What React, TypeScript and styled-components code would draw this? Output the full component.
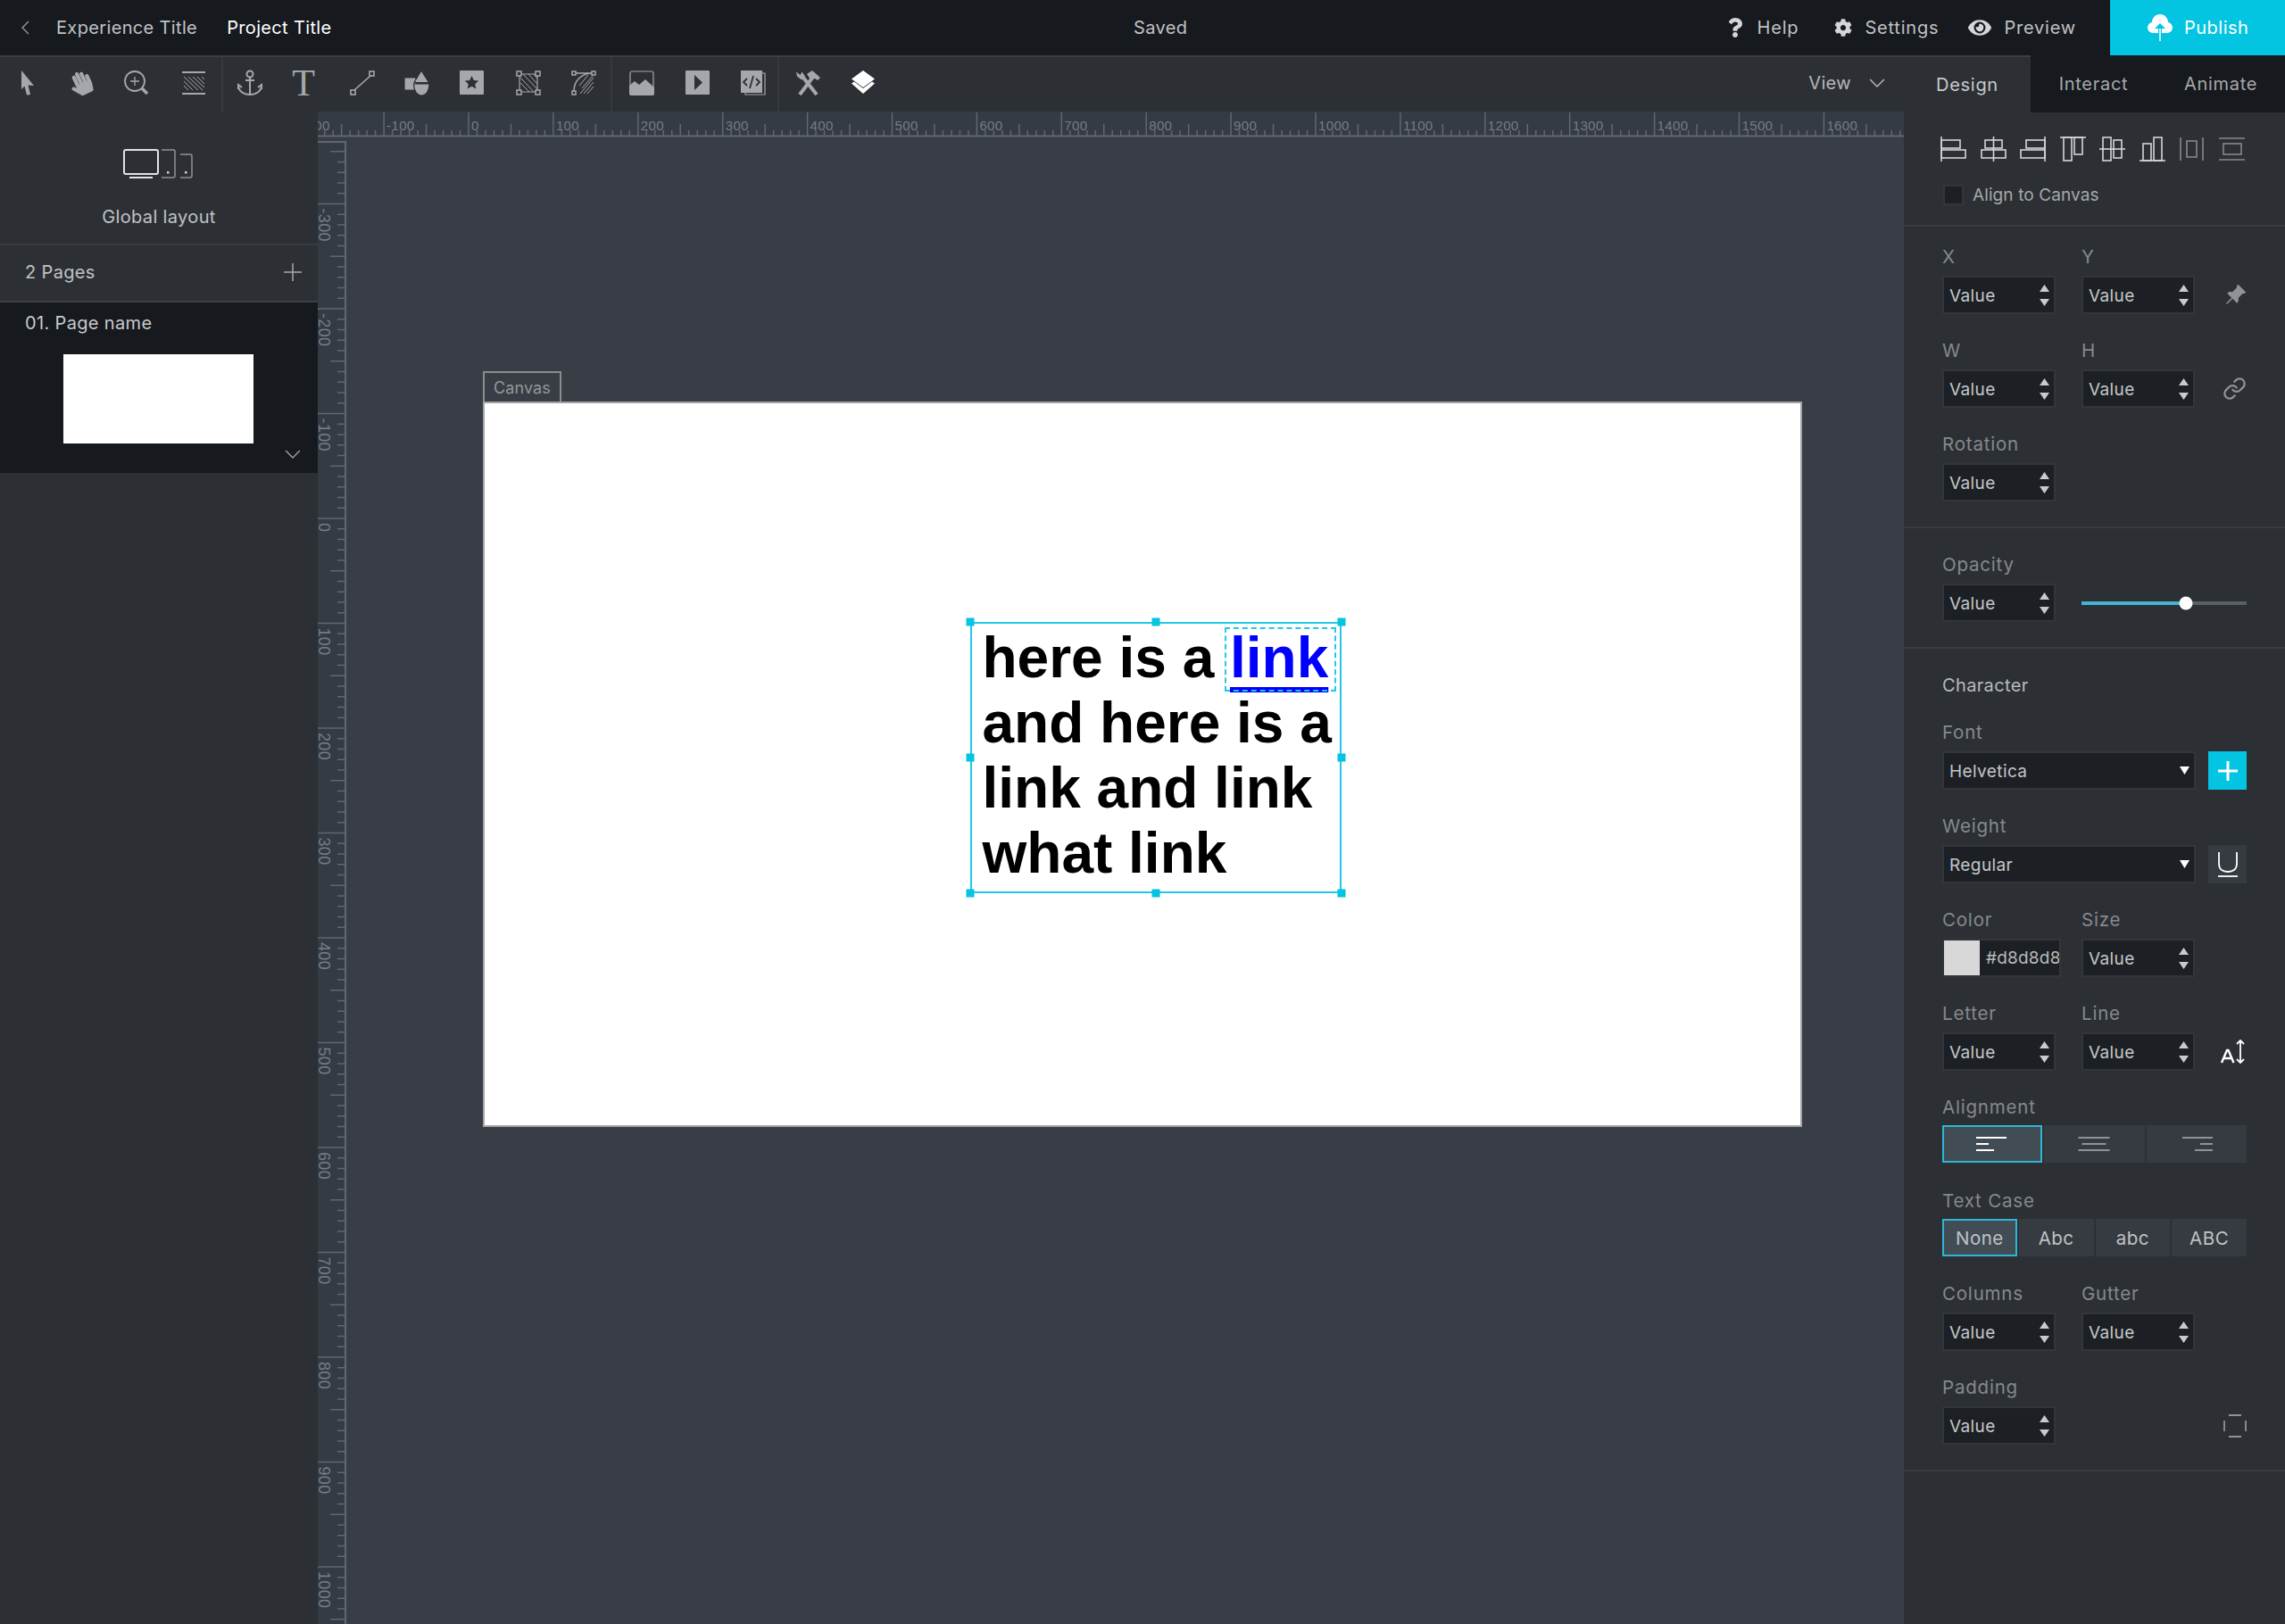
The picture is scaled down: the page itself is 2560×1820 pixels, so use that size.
import React from "react";
import styled, { createGlobalStyle } from "styled-components";
import { FaCog, FaEye, FaHandPaper, FaQuestion } from "react-icons/fa";
import { BsPinAngleFill } from "react-icons/bs";
import { FiLink } from "react-icons/fi";

const UI_FONT = `"Inter", "Noto Sans", sans-serif`;
const CYAN = "#03c4e1";

const GlobalStyle = createGlobalStyle`
	html, body {
		margin: 0;
		padding: 0;
		background: #2c3035;
	}

	* {
		box-sizing: border-box;
	}
`;

function Chevron({ dir = "down", size = 16 }: { dir?: "down" | "left"; size?: number }) {
	return (
		<svg width={size} height={size} viewBox="0 0 16 16" fill="none" stroke="currentColor" strokeWidth="1.3">
			{dir === "down" ? <path d="M1 4.5l7 7 7-7" /> : <path d="M11 1L4 8l7 7" />}
		</svg>
	);
}

function CloudIcon() {
	return (
		<svg width="28" height="32" viewBox="0 0 28 32" fill="#fff">
			<path d="M6.5 22C3 22 0 19.4 0 16c0-2.900 2-5.300 4.800-6C5.600 4.300 9.300 1 14 1s8.400 3.300 9.200 9c2.800.7 4.800 3.100 4.800 6 0 3.400-3 6-6.500 6z" />
			<path d="M14 11l-6 6h4v6h4v-6h4z" fill={CYAN} />
			<rect x="13.200" y="17" width="1.600" height="14" />
		</svg>
	);
}

function ArrowTool() {
	return (
		<svg width="28" height="28" viewBox="0 0 28 28" fill="currentColor">
			<path d="M7 0l14 17-6.500-.5L17 27l-4 .5-2.500-10L7 21z" />
		</svg>
	);
}

function ZoomTool() {
	return (
		<svg width="28" height="28" viewBox="0 0 28 28" fill="none" stroke="currentColor" strokeWidth="1.800">
			<circle cx="12" cy="12" r="11" />
			<path d="M12 7v10M7 12h10" strokeWidth="1.300" />
			<path d="M20 20l6 6" strokeWidth="3.500" />
		</svg>
	);
}

function HatchTool() {
	return (
		<svg width="28" height="28" viewBox="0 0 28 28" fill="none" stroke="currentColor">
			<path d="M1 2h26M1 26h26" strokeWidth="2" />
			<path d="M3 7l16 15M8 7l16 15M13 7l13 12M18 7l8 8M3 12l10 10M3 17l5 5M23 7l3 3" strokeWidth="1" />
		</svg>
	);
}

function AnchorTool() {
	return (
		<svg width="28" height="30" viewBox="0 0 28 30" fill="none" stroke="currentColor" strokeWidth="2">
			<circle cx="14" cy="5" r="3.500" />
			<path d="M14 8.500V28M9 12h10M1 18c0 6 6 10 13 10s13-4 13-10" />
			<path d="M1 22l0-5 4 3M27 22v-5l-4 3" />
		</svg>
	);
}

function LineTool() {
	return (
		<svg width="28" height="28" viewBox="0 0 28 28" fill="none" stroke="currentColor" strokeWidth="1.600">
			<rect x="22" y="1" width="5" height="5" />
			<rect x="1" y="22" width="5" height="5" />
			<path d="M23 6L5 22" />
		</svg>
	);
}

function ShapesTool() {
	return (
		<svg width="28" height="28" viewBox="0 0 28 28" fill="currentColor" stroke="#2c3035" strokeWidth="1.200">
			<path d="M0 8h13v14H0z" />
			<path d="M19 0l8.500 13.500H11z" />
			<path d="M10.500 15h17.500c0 7.500-3.500 13-8.700 13s-8.800-5.500-8.800-13z" />
		</svg>
	);
}

function StarTool() {
	return (
		<svg width="28" height="28" viewBox="0 0 28 28">
			<rect width="27" height="27" rx="1" fill="currentColor" />
			<path d="M13.500 6l2.300 5 5.400.6-4 3.600 1.100 5.300-4.800-2.700-4.800 2.700 1.100-5.300-4-3.600 5.400-.6z" fill="#2c3035" />
		</svg>
	);
}

function FrameTool() {
	return (
		<svg width="28" height="28" viewBox="0 0 28 28" fill="none" stroke="currentColor">
			<path d="M4 4h20v20H4z" strokeWidth="1.200" />
			<path d="M5 8l15 16M5 14l10 10M8 4l16 17M14 4l10 11M20 4l4 5" strokeWidth="1" />
			<g fill="#2c3035" strokeWidth="1.500">
				<rect x="1" y="1" width="5" height="5" />
				<rect x="22" y="1" width="5" height="5" />
				<rect x="1" y="22" width="5" height="5" />
				<rect x="22" y="22" width="5" height="5" />
			</g>
		</svg>
	);
}

function CurveTool() {
	return (
		<svg width="28" height="28" viewBox="0 0 28 28" fill="none" stroke="currentColor">
			<path d="M10 26L25 8M14 26l11-13M18 26l7-8M12 20l12-14M9 17l10-12" strokeWidth="1" />
			<path d="M3 23C3 11 12 3 24 3H3" strokeWidth="1.500" />
			<g fill="#2c3035" strokeWidth="1.500">
				<rect x="1" y="1" width="4" height="4" />
				<rect x="23" y="1" width="4" height="4" />
				<rect x="1" y="23" width="4" height="4" />
			</g>
		</svg>
	);
}

function ImageTool() {
	return (
		<svg width="28" height="28" viewBox="0 0 28 28" fill="none" stroke="currentColor">
			<rect x="1" y="1" width="26" height="26" rx="2" strokeWidth="1.200" />
			<path d="M0 17l6-5 5 4 7-6 10 9v7a2 2 0 0 1-2 2H2a2 2 0 0 1-2-2z" fill="currentColor" stroke="none" />
		</svg>
	);
}

function PlayTool() {
	return (
		<svg width="28" height="28" viewBox="0 0 28 28">
			<rect width="27" height="27" rx="1" fill="currentColor" />
			<path d="M10 5l9 8.500L10 22z" fill="#2c3035" />
		</svg>
	);
}

function CodeTool() {
	return (
		<svg width="28" height="28" viewBox="0 0 28 28" fill="none">
			<path d="M24 3h3v24H5v-2" stroke="currentColor" strokeWidth="1.200" />
			<rect width="24" height="25" fill="currentColor" />
			<path d="M7 9l-4 4 4 4M17 9l4 4-4 4M14 6l-4 14" stroke="#2c3035" strokeWidth="1.800" />
		</svg>
	);
}

function ToolsTool() {
	return (
		<svg width="28" height="28" viewBox="0 0 28 28" fill="none" stroke="currentColor">
			<path d="M5 27L20 7" strokeWidth="4" />
			<path d="M13 4l6-4 9 8-3 3-3-2-5 1z" fill="currentColor" stroke="none" />
			<path d="M24 27L9 8" strokeWidth="4" />
			<path d="M1 1.500l1 5 5 4 4-4-3.500-5-2 3.500z" fill="currentColor" stroke="none" />
		</svg>
	);
}

function LayersTool() {
	return (
		<svg width="28" height="28" viewBox="0 0 28 28" fill="currentColor">
			<path d="M14 0l13 9.500L14 19 1 9.500z" />
			<path d="M1 14.500l3-2L14 20l10-7.500 3 2L14 26z" />
		</svg>
	);
}

function DevicesIcon() {
	return (
		<svg width="80" height="36" viewBox="0 0 80 36" fill="none">
			<rect x="1" y="1" width="38" height="27" rx="2" stroke="#e2e3e4" strokeWidth="2" />
			<path d="M7 32h26" stroke="#e2e3e4" strokeWidth="2" />
			<path d="M43 1h13a2 2 0 0 1 2 2v27a2 2 0 0 1-2 2H43" stroke="#8f9396" strokeWidth="1.500" />
			<rect x="49" y="25" width="2.500" height="2.500" fill="#cfd1d2" />
			<path d="M64 6h11a2 2 0 0 1 2 2v22a2 2 0 0 1-2 2H64" stroke="#8f9396" strokeWidth="1.500" />
			<rect x="69" y="25" width="2.500" height="2.500" fill="#cfd1d2" />
		</svg>
	);
}

type AlignShape = { line: string; rects: number[][]; dim?: boolean };

const alignIcons: AlignShape[] = [
	{ line: "M1 0v28", rects: [[1, 4, 21, 9], [1, 15, 27, 9]] },
	{ line: "M14.500 0v28", rects: [[5, 4, 19, 9], [1, 15, 27, 9]] },
	{ line: "M28 0v28", rects: [[7, 4, 21, 9], [1, 15, 27, 9]] },
	{ line: "M0 1h29", rects: [[4, 1, 9, 26], [16, 1, 9, 19]] },
	{ line: "M0 14h29", rects: [[4, 1, 9, 26], [16, 4, 9, 20]] },
	{ line: "M0 27h29", rects: [[4, 8, 9, 19], [16, 1, 9, 26]] },
	{ line: "M1 1v26M26 1v26", rects: [[8, 5, 11, 18]], dim: true },
	{ line: "M0 2h29M0 26h29", rects: [[5, 8, 20, 12]], dim: true },
];

function AlignIcon({ shape }: { shape: AlignShape }) {
	const color = shape.dim ? "#85898c" : "#d4d6d7";
	return (
		<svg width="29" height="28" viewBox="0 0 29 28" fill="none" stroke={color} strokeWidth="1.600">
			<path d={shape.line} />
			{shape.rects.map((r, i) => (
				<rect key={i} x={r[0]} y={r[1]} width={r[2]} height={r[3]} />
			))}
		</svg>
	);
}

function SpinArrows() {
	return (
		<svg width="11" height="24" viewBox="0 0 11 24" fill="#c8cacb">
			<path d="M5.500 0L11 8H0z" />
			<path d="M5.500 24L0 16h11z" />
		</svg>
	);
}

function Caret() {
	return (
		<svg width="11" height="9" viewBox="0 0 11 9" fill="#fff">
			<path d="M0 0h11L5.500 9z" />
		</svg>
	);
}

function TextLines({ widths, align, active }: { widths: number[]; align: "left" | "center" | "right"; active?: boolean }) {
	const full = 36;
	return (
		<svg width={full} height="18" viewBox={`0 0 ${full} 18`} stroke={active ? "#fff" : "#8f9396"} strokeWidth="2">
			{widths.map((w, i) => {
				const x = align === "left" ? 0 : align === "center" ? (full - w) / 2 : full - w;
				return <line key={i} x1={x} x2={x + w} y1={2 + i * 7} y2={2 + i * 7} />;
			})}
		</svg>
	);
}

function ArrowsTextIcon() {
	return (
		<svg width="30" height="28" viewBox="0 0 30 28" fill="none" stroke="#fff" strokeWidth="1.800">
			<path d="M23 1v25M19 5l4-4 4 4M19 22l4 4 4-4" />
			<path d="M2 26l6-14h1.500l6 14M4.500 21h9" strokeWidth="2.400" />
		</svg>
	);
}

function PaddingIcon() {
	return (
		<svg width="26" height="26" viewBox="0 0 26 26" stroke="#8f9396" strokeWidth="1.800">
			<path d="M6 1h14M6 25h14M1 7v12M25 7v12" />
		</svg>
	);
}

function TopRuler() {
	const zero = 169;
	const step = 9.49;
	const ticks: number[] = [];
	for (let u = -180; u <= 1700; u += 10) ticks.push(u);
	return (
		<svg width="1777" height="29" style={{ display: "block" }}>
			{ticks.map((u) => {
				const x = zero + (u / 10) * step;
				const major = u % 100 === 0;
				const mid = !major && u % 50 === 0;
				return <line key={u} x1={x} x2={x} y1={major ? 1 : mid ? 14 : 21} y2={27} stroke="#62676c" strokeWidth="1.500" />;
			})}
			{[-200, -100, 0, 100, 200, 300, 400, 500, 600, 700, 800, 900, 1000, 1100, 1200, 1300, 1400, 1500, 1600].map((u) => (
				<text key={u} x={zero + (u / 10) * step + 3} y={21} fontFamily="Liberation Sans" fontSize="15" fill="#777c81">
					{u}
				</text>
			))}
			<line x1="0" x2="1777" y1="27.500" y2="27.500" stroke="#62676c" strokeWidth="2" />
		</svg>
	);
}

function LeftRuler() {
	const zero = 423;
	const step = 11.75;
	const ticks: number[] = [];
	for (let u = -350; u <= 1060; u += 10) ticks.push(u);
	return (
		<svg width="32" height="1662" style={{ display: "block" }}>
			<line x1="0" x2="32" y1="1" y2="1" stroke="#62676c" strokeWidth="2" />
			{ticks.map((u) => {
				const y = zero + (u / 10) * step;
				const major = u % 100 === 0;
				const mid = !major && u % 50 === 0;
				return <line key={u} x1={major ? 0 : mid ? 14 : 22} x2={31} y1={y} y2={y} stroke="#62676c" strokeWidth="1.500" />;
			})}
			{[-300, -200, -100, 0, 100, 200, 300, 400, 500, 600, 700, 800, 900, 1000].map((u) => (
				<text
					key={u}
					transform={`translate(1 ${zero + (u / 10) * step + 5}) rotate(90)`}
					fontFamily="Liberation Sans"
					fontSize="18"
					fill="#777c81"
				>
					{u}
				</text>
			))}
			<line x1="31" x2="31" y1="0" y2="1662" stroke="#62676c" strokeWidth="2" />
		</svg>
	);
}

function Spin({ label }: { label: string }) {
	return (
		<Cell>
			<FieldLabel>{label}</FieldLabel>
			<Field $w={127}>
				<span>Value</span>
				<SpinArrows />
			</Field>
		</Cell>
	);
}

function Select({ label, value }: { label: string; value: string }) {
	return (
		<SelectCell>
			<FieldLabel>{label}</FieldLabel>
			<Field $w={284}>
				<span>{value}</span>
				<Caret />
			</Field>
		</SelectCell>
	);
}

const handles = [
	[0, 0],
	[50, 0],
	[100, 0],
	[0, 50],
	[100, 50],
	[0, 100],
	[50, 100],
	[100, 100],
];

export default function App() {
	const toolGroups = [
		[
			{ icon: <ArrowTool />, dx: 0 },
			{ icon: <FaHandPaper size={27} style={{ transform: "rotate(-25deg)" }} />, dx: -3 },
			{ icon: <ZoomTool />, dx: -3 },
			{ icon: <HatchTool />, dx: -1 },
		],
		[
			{ icon: <AnchorTool />, dx: -1 },
			{ icon: <SerifT>T</SerifT>, dx: -3 },
			{ icon: <LineTool />, dx: 0 },
			{ icon: <ShapesTool />, dx: -1 },
			{ icon: <StarTool />, dx: -1 },
			{ icon: <FrameTool />, dx: -1 },
			{ icon: <CurveTool />, dx: -1 },
		],
		[
			{ icon: <ImageTool />, dx: 2 },
			{ icon: <PlayTool />, dx: 2 },
			{ icon: <CodeTool />, dx: 2 },
		],
	];

	return (
		<Page>
			<GlobalStyle />
			<TopBar>
				<TitleGroup>
					<BackButton>
						<Chevron dir="left" size={16} />
					</BackButton>
					<Crumb>Experience Title</Crumb>
					<Crumb $current>Project Title</Crumb>
				</TitleGroup>
				<Crumb>Saved</Crumb>
				<NavGroup>
					<NavItem $mr={7}>
						<FaQuestion size={22} />
						<span>Help</span>
					</NavItem>
					<NavItem>
						<FaCog size={20} />
						<span>Settings</span>
					</NavItem>
					<NavItem>
						<FaEye size={26} />
						<span>Preview</span>
					</NavItem>
					<PublishButton>
						<CloudIcon />
						<span>Publish</span>
					</PublishButton>
				</NavGroup>
			</TopBar>

			<Body>
				<Main>
					<Toolbar>
						{toolGroups.map((group, g) => (
							<ToolGroup key={g}>
								{group.map((tool, i) => (
									<ToolButton key={i} $dx={tool.dx}>
										{tool.icon}
									</ToolButton>
								))}
							</ToolGroup>
						))}
						<ToolButton>
							<ToolsTool />
						</ToolButton>
						<ToolButton $active>
							<LayersTool />
						</ToolButton>
						<ViewMenu>
							<span>View</span>
							<Chevron size={18} />
						</ViewMenu>
					</Toolbar>

					<Content>
						<LeftPanel>
							<GlobalBox>
								<DevicesIcon />
								<GlobalLabel>Global layout</GlobalLabel>
							</GlobalBox>
							<PagesHeader>
								<span>2 Pages</span>
								<svg width="20" height="20" viewBox="0 0 20 20" stroke="#a5a8aa" strokeWidth="1.500">
									<path d="M10 0v20M0 10h20" />
								</svg>
							</PagesHeader>
							<PageItem>
								<PageName>01. Page name</PageName>
								<Thumb />
								<PageFoot>
									<Chevron size={18} />
								</PageFoot>
							</PageItem>
						</LeftPanel>

						<Stage>
							<RulerTop>
								<TopRuler />
							</RulerTop>
							<StageBody>
								<RulerSide>
									<LeftRuler />
								</RulerSide>
								<Workspace>
									<CanvasTag>Canvas</CanvasTag>
									<Canvas>
										<TextFrame>
											<FrameText>
												here is a <a>link</a> and here is a link and link what link
											</FrameText>
											<LinkOutline />
											{handles.map(([x, y], i) => (
												<Handle key={i} $x={x} $y={y} />
											))}
										</TextFrame>
									</Canvas>
								</Workspace>
							</StageBody>
						</Stage>
					</Content>
				</Main>

				<Inspector>
					<Tabs>
						<Tab $active>Design</Tab>
						<Tab>Interact</Tab>
						<Tab>Animate</Tab>
					</Tabs>

					<AlignSection>
						<AlignRow>
							{alignIcons.map((shape, i) => (
								<AlignIcon key={i} shape={shape} />
							))}
						</AlignRow>
						<CheckRow>
							<CheckBox />
							<span>Align to Canvas</span>
						</CheckRow>
					</AlignSection>

					<Section $top={24}>
						<Row>
							<Spin label="X" />
							<Spin label="Y" />
							<IconCell $color="#8f9396">
								<BsPinAngleFill size={25} />
							</IconCell>
						</Row>
						<Row>
							<Spin label="W" />
							<Spin label="H" />
							<IconCell $color="#8f9396">
								<FiLink size={27} />
							</IconCell>
						</Row>
						<Row>
							<Spin label="Rotation" />
						</Row>
					</Section>

					<Section $top={31}>
						<Row>
							<Spin label="Opacity" />
							<SliderCell>
								<Slider>
									<SliderFill style={{ width: "63%" }} />
									<SliderThumb style={{ left: "63%" }} />
								</Slider>
							</SliderCell>
						</Row>
					</Section>

					<Section $top={31}>
						<SectionTitle>Character</SectionTitle>
						<Row>
							<Select label="Font" value="Helvetica" />
							<SquareButton $accent>
								<svg width="22" height="22" viewBox="0 0 22 22" stroke="#fff" strokeWidth="3">
									<path d="M11 0v22M0 11h22" />
								</svg>
							</SquareButton>
						</Row>
						<Row>
							<Select label="Weight" value="Regular" />
							<SquareButton>
								<svg width="24" height="30" viewBox="0 0 24 30" fill="none" stroke="#fff" strokeWidth="1.800">
									<path d="M2 1v13c0 6 4 9 10 9s10-3 10-9V1" />
									<path d="M1 28h22" />
								</svg>
							</SquareButton>
						</Row>
						<Row>
							<Cell>
								<FieldLabel>Color</FieldLabel>
								<ColorField>
									<Swatch />
									<span>#d8d8d8</span>
								</ColorField>
							</Cell>
							<Spin label="Size" />
						</Row>
						<Row>
							<Spin label="Letter" />
							<Spin label="Line" />
							<IconCell $color="#fff">
								<ArrowsTextIcon />
							</IconCell>
						</Row>
						<Block $mb={33}>
							<FieldLabel>Alignment</FieldLabel>
							<Segmented $cols={3}>
								<Segment $active>
									<TextLines widths={[34, 14, 20]} align="left" active />
								</Segment>
								<Segment>
									<TextLines widths={[35, 27, 35]} align="center" />
								</Segment>
								<Segment>
									<TextLines widths={[34, 14, 20]} align="right" />
								</Segment>
							</Segmented>
						</Block>
						<Block $mb={32}>
							<FieldLabel>Text Case</FieldLabel>
							<Segmented $cols={4}>
								<Segment $active>None</Segment>
								<Segment>Abc</Segment>
								<Segment>abc</Segment>
								<Segment>ABC</Segment>
							</Segmented>
						</Block>
						<Row>
							<Spin label="Columns" />
							<Spin label="Gutter" />
						</Row>
						<Row>
							<Spin label="Padding" />
							<span />
							<IconCell>
								<PaddingIcon />
							</IconCell>
						</Row>
					</Section>
				</Inspector>
			</Body>
		</Page>
	);
}

const Page = styled.div`
	width: 2560px;
	height: 1820px;
	display: flex;
	flex-direction: column;
	overflow: hidden;
	font-family: ${UI_FONT};
	font-size: 20px;
	letter-spacing: 0.35px;
	background: #2c3035;
`;

const TopBar = styled.header`
	height: 62px;
	flex: none;
	display: grid;
	grid-template-columns: 1270px auto 1fr;
	align-items: center;
	background: #16191e;
`;

const TitleGroup = styled.div`
	display: flex;
	align-items: center;
	padding-left: 21px;
`;

const BackButton = styled.div`
	display: flex;
	width: 42px;
	color: #9a9da0;
`;

const Crumb = styled.div<{ $current?: boolean }>`
	color: ${(props) => (props.$current ? "#fff" : "#c0c2c4")};
	margin-right: 33px;
	white-space: nowrap;
`;

const NavGroup = styled.div`
	display: flex;
	align-items: center;
	justify-content: flex-end;
	height: 62px;
	gap: 33px;
`;

const NavItem = styled.div<{ $mr?: number }>`
	display: flex;
	align-items: center;
	gap: 14px;
	margin-right: ${(props) => props.$mr || 0}px;
	letter-spacing: 0.8px;
	color: #c0c2c4;

	svg {
		color: #d4d6d7;
	}
`;

const PublishButton = styled.button`
	width: 196px;
	height: 62px;
	display: flex;
	align-items: center;
	gap: 13px;
	margin-left: 5px;
	padding: 0 0 0 42px;
	border: 0;
	background: ${CYAN};
	color: #fff;
	font-family: inherit;
	font-size: inherit;
	letter-spacing: 0.5px;
`;

const Body = styled.div`
	flex: 1;
	display: flex;
	min-height: 0;
`;

const Main = styled.div`
	width: 2133px;
	display: flex;
	flex-direction: column;
`;

const Toolbar = styled.div`
	height: 63px;
	flex: none;
	display: flex;
	align-items: stretch;
	padding-bottom: 3px;
	background: #2c3035;
	border-top: 2px solid #3b3f45;
`;

const ToolGroup = styled.div`
	display: flex;
	margin-bottom: -3px;
	box-shadow: inset -2px 0 0 #363a40;
`;

const ToolButton = styled.div<{ $active?: boolean; $dx?: number }>`
	width: 62.4px;
	height: 58px;
	display: flex;
	align-items: center;
	justify-content: center;
	transform: translateX(${(props) => props.$dx || 0}px);
	color: ${(props) => (props.$active ? "#fff" : "#a5a8aa")};
`;

const SerifT = styled.span`
	font-family: "Liberation Serif", serif;
	font-size: 42px;
	line-height: 1;
`;

const ViewMenu = styled.div`
	margin-left: auto;
	display: flex;
	align-items: center;
	gap: 20px;
	padding-right: 21px;
	color: #b4b7b9;
`;

const Content = styled.div`
	flex: 1;
	display: flex;
	min-height: 0;
`;

const LeftPanel = styled.aside`
	width: 356px;
	flex: none;
	background: #2c3035;
`;

const GlobalBox = styled.div`
	height: 150px;
	display: flex;
	flex-direction: column;
	align-items: center;
	padding-top: 42px;
	border-bottom: 2px solid #383c42;
`;

const GlobalLabel = styled.div`
	margin-top: 28px;
	color: #c0c2c4;
`;

const PagesHeader = styled.div`
	height: 62px;
	display: flex;
	align-items: center;
	justify-content: space-between;
	padding: 0 18px 3px 28px;
	color: #c0c2c4;
`;

const PageItem = styled.div`
	height: 193px;
	background: #16191e;
	padding-top: 13px;
	border-top: 2px solid #3b3f45;
`;

const PageName = styled.div`
	margin-left: 28px;
	line-height: 20px;
	color: #c8cacb;
`;

const Thumb = styled.div`
	width: 213px;
	height: 100px;
	margin: 25px 0 0 71px;
	background: #fff;
`;

const PageFoot = styled.div`
	display: flex;
	justify-content: flex-end;
	padding: 3px 19px 0 0;
	color: #9a9da0;
`;

const Stage = styled.main`
	flex: 1;
	display: flex;
	flex-direction: column;
	min-width: 0;
	background: #393e46;
`;

const RulerTop = styled.div`
	height: 29px;
	flex: none;
	overflow: hidden;
	background: #343b45;
`;

const StageBody = styled.div`
	flex: 1;
	display: flex;
	min-height: 0;
`;

const RulerSide = styled.div`
	width: 32px;
	flex: none;
	margin-top: 4px;
	overflow: hidden;
	background: #343b45;
`;

const Workspace = styled.div`
	flex: 1;
	padding: 262px 0 0 153px;
`;

const CanvasTag = styled.div`
	width: 88px;
	height: 34px;
	display: flex;
	align-items: center;
	padding-left: 10px;
	border: 2px solid #8a8d90;
	border-bottom: 0;
	font-size: 18px;
	letter-spacing: 0.1px;
	color: #94979a;
`;

const Canvas = styled.div`
	position: relative;
	width: 1478px;
	height: 813px;
	background: #fff;
	border: 2px solid #a4a5a7;
`;

const TextFrame = styled.div`
	position: absolute;
	left: 544px;
	top: 245px;
	width: 416px;
	height: 304px;
	box-shadow: inset 0 0 0 2px #22c8e6;
`;

const FrameText = styled.div`
	padding: 4px 0 0 13.5px;
	font-family: "Liberation Sans", Arial, sans-serif;
	font-weight: 700;
	font-size: 64px;
	letter-spacing: 0;
	line-height: 73px;
	color: #000;

	a {
		color: #0000ff;
		text-decoration: underline;
		text-decoration-thickness: 6px;
		text-underline-offset: 11px;
		text-decoration-skip-ink: none;
	}
`;

const LinkOutline = styled.div`
	position: absolute;
	left: 285px;
	top: 6px;
	width: 125px;
	height: 72px;
	border: 2px dashed #22c8e6;
`;

const Handle = styled.span<{ $x: number; $y: number }>`
	position: absolute;
	left: ${(props) => props.$x}%;
	top: ${(props) => props.$y}%;
	width: 9px;
	height: 9px;
	transform: translate(-50%, -50%);
	background: ${CYAN};
`;

const Inspector = styled.aside`
	width: 427px;
	flex: none;
	background: #2c3035;
`;

const Tabs = styled.div`
	height: 64px;
	display: grid;
	grid-template-columns: 142px 141px 144px;
	background: #16191e;
`;

const Tab = styled.div<{ $active?: boolean }>`
	display: flex;
	align-items: center;
	justify-content: center;
	letter-spacing: 0.7px;
	color: ${(props) => (props.$active ? "#c8cacb" : "#a5a8aa")};
	background: ${(props) => (props.$active ? "#2c3035" : "transparent")};
	border-top: ${(props) => (props.$active ? "2px solid #3b3f45" : "0")};
`;

const AlignSection = styled.section`
	height: 128px;
	padding: 27px 0 0 41px;
	border-bottom: 2px solid #383c42;
`;

const AlignRow = styled.div`
	display: flex;
	gap: 15.6px;
`;

const CheckRow = styled.div`
	display: flex;
	align-items: center;
	gap: 10px;
	margin: 26px 0 0 3px;
	font-size: 19px;
	letter-spacing: 0.1px;
	color: #a5a8aa;
`;

const CheckBox = styled.span`
	width: 23px;
	height: 23px;
	background: #1c2024;
	border: 2px solid #32363b;
`;

const Section = styled.section<{ $top: number }>`
	padding: ${(props) => props.$top}px 43px 28px 43px;
	border-bottom: 2px solid #383c42;

	& > *:last-child {
		margin-bottom: 0;
	}
`;

const SectionTitle = styled.div`
	height: 20px;
	margin-bottom: 33px;
	line-height: 20px;
	color: #b7babc;
`;

const Row = styled.div`
	display: grid;
	grid-template-columns: 156px 141px 44px;
	height: 74px;
	margin-bottom: 31px;
`;

const Cell = styled.div`
	display: flex;
	flex-direction: column;
	gap: 11px;
`;

const SelectCell = styled(Cell)`
	grid-column: span 2;
`;

const FieldLabel = styled.div`
	height: 20px;
	font-size: 20.5px;
	letter-spacing: 0.8px;
	line-height: 20px;
	color: #85898c;
`;

const Field = styled.div<{ $w: number }>`
	width: ${(props) => props.$w}px;
	height: 43px;
	display: flex;
	align-items: center;
	justify-content: space-between;
	padding: 0 5px 0 6px;
	background: #1c2024;
	border: 2px solid #32363b;
	font-size: 19px;
	letter-spacing: 0.4px;
	color: #c4c6c8;

	span {
		padding-top: 2px;
	}
`;

const ColorField = styled.div`
	width: 133px;
	height: 43px;
	display: flex;
	align-items: center;
	gap: 7px;
	background: #1c2024;
	border: 2px solid #32363b;
	font-size: 19px;
	letter-spacing: 0.2px;
	color: #b8babc;
	white-space: nowrap;
	overflow: hidden;
`;

const Swatch = styled.span`
	width: 40px;
	height: 39px;
	flex: none;
	background: #d8d8d8;
`;

const IconCell = styled.div<{ $color?: string }>`
	align-self: end;
	height: 43px;
	display: flex;
	align-items: center;
	justify-content: flex-end;
	color: ${(props) => props.$color || "#8f9396"};
`;

const SquareButton = styled.div<{ $accent?: boolean }>`
	align-self: end;
	justify-self: end;
	width: 43px;
	height: 43px;
	display: flex;
	align-items: center;
	justify-content: center;
	background: ${(props) => (props.$accent ? CYAN : "#363b41")};
`;

const SliderCell = styled.div`
	grid-column: span 2;
	align-self: end;
	height: 43px;
	display: flex;
	align-items: center;
`;

const Slider = styled.div`
	position: relative;
	width: 185px;
	height: 4px;
	background: #5a5f64;
`;

const SliderFill = styled.div`
	height: 100%;
	background: #44b4d0;
`;

const SliderThumb = styled.span`
	position: absolute;
	top: 50%;
	width: 15px;
	height: 15px;
	border-radius: 50%;
	background: #fff;
	transform: translate(-50%, -50%);
`;

const Block = styled.div<{ $mb: number }>`
	margin-bottom: ${(props) => props.$mb}px;
`;

const Segmented = styled.div<{ $cols: number }>`
	display: grid;
	grid-template-columns: repeat(${(props) => props.$cols}, 1fr);
	gap: 2px;
	width: 341px;
	height: 42px;
	margin-top: 10px;
`;

const Segment = styled.div<{ $active?: boolean }>`
	display: flex;
	align-items: center;
	justify-content: center;
	font-size: 20.5px;
	letter-spacing: 0.5px;
	color: #c0c2c4;
	background: ${(props) => (props.$active ? "#414c54" : "#363b42")};
	border: ${(props) => (props.$active ? "2px solid #2fb6d6" : "0")};
`;
